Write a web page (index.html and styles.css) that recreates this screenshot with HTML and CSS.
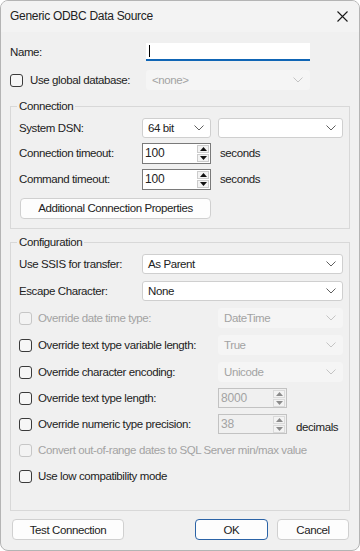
FILE: index.html
```html
<!DOCTYPE html>
<html lang="en">
<head>
  <meta charset="UTF-8">
  <meta name="viewport" content="width=device-width, initial-scale=1.0">
  <title>Generic ODBC Data Source</title>
  <link rel="stylesheet" href="styles.css">
</head>
<body>
  <div class="window">
    <div class="titlebar">
      <span class="title">Generic ODBC Data Source</span>
      <svg class="close" width="11" height="11" viewBox="0 0 11 11">
        <path d="M0.5 0.5 L10.5 10.5 M10.5 0.5 L0.5 10.5" stroke="#1a1a1a" stroke-width="1.1" fill="none"/>
      </svg>
    </div>

    <div class="content">
      <div class="row top-row">
        <label class="top-label">Name:</label>
        <div class="textbox"><span class="caret"></span></div>
      </div>
      <div class="row top-row">
        <div class="top-label check-label">
          <span class="checkbox"></span>
          <span>Use global database:</span>
        </div>
        <div class="combo combo-top disabled">
          <span>&lt;none&gt;</span>
          <svg class="chevron" width="10" height="6" viewBox="0 0 10 6"><path d="M0.5 0.5 L5 5 L9.5 0.5" fill="none"/></svg>
        </div>
      </div>

      <fieldset class="group">
        <legend>Connection</legend>
        <div class="group-rows conn-rows">
          <div class="row">
            <span class="label">System DSN:</span>
            <div class="combo combo-small">
              <span>64 bit</span>
              <svg class="chevron" width="10" height="6" viewBox="0 0 10 6"><path d="M0.5 0.5 L5 5 L9.5 0.5" fill="none"/></svg>
            </div>
            <div class="combo combo-dsn">
              <span></span>
              <svg class="chevron" width="10" height="6" viewBox="0 0 10 6"><path d="M0.5 0.5 L5 5 L9.5 0.5" fill="none"/></svg>
            </div>
          </div>
          <div class="row">
            <span class="label">Connection timeout:</span>
            <div class="spinner">
              <span class="spin-value">100</span>
              <div class="spin-buttons">
                <span class="spin-btn"><svg width="7" height="4" viewBox="0 0 7 4"><path d="M0 4 L3.5 0 L7 4 Z"/></svg></span>
                <span class="spin-btn"><svg width="7" height="4" viewBox="0 0 7 4"><path d="M0 0 L3.5 4 L7 0 Z"/></svg></span>
              </div>
            </div>
            <span class="unit">seconds</span>
          </div>
          <div class="row">
            <span class="label">Command timeout:</span>
            <div class="spinner">
              <span class="spin-value">100</span>
              <div class="spin-buttons">
                <span class="spin-btn"><svg width="7" height="4" viewBox="0 0 7 4"><path d="M0 4 L3.5 0 L7 4 Z"/></svg></span>
                <span class="spin-btn"><svg width="7" height="4" viewBox="0 0 7 4"><path d="M0 0 L3.5 4 L7 0 Z"/></svg></span>
              </div>
            </div>
            <span class="unit">seconds</span>
          </div>
          <div class="row button-row">
            <button class="btn btn-props">Additional Connection Properties</button>
          </div>
        </div>
      </fieldset>

      <fieldset class="group">
        <legend>Configuration</legend>
        <div class="group-rows conf-rows">
          <div class="row">
            <span class="label">Use SSIS for transfer:</span>
            <div class="combo combo-wide">
              <span>As Parent</span>
              <svg class="chevron" width="10" height="6" viewBox="0 0 10 6"><path d="M0.5 0.5 L5 5 L9.5 0.5" fill="none"/></svg>
            </div>
          </div>
          <div class="row">
            <span class="label">Escape Character:</span>
            <div class="combo combo-wide">
              <span>None</span>
              <svg class="chevron" width="10" height="6" viewBox="0 0 10 6"><path d="M0.5 0.5 L5 5 L9.5 0.5" fill="none"/></svg>
            </div>
          </div>
          <div class="row">
            <div class="opt-label check-label disabled-text">
              <span class="checkbox checkbox-disabled"></span>
              <span>Override date time type:</span>
            </div>
            <div class="combo combo-dsn disabled">
              <span>DateTime</span>
              <svg class="chevron" width="10" height="6" viewBox="0 0 10 6"><path d="M0.5 0.5 L5 5 L9.5 0.5" fill="none"/></svg>
            </div>
          </div>
          <div class="row">
            <div class="opt-label check-label">
              <span class="checkbox"></span>
              <span>Override text type variable length:</span>
            </div>
            <div class="combo combo-dsn disabled">
              <span>True</span>
              <svg class="chevron" width="10" height="6" viewBox="0 0 10 6"><path d="M0.5 0.5 L5 5 L9.5 0.5" fill="none"/></svg>
            </div>
          </div>
          <div class="row">
            <div class="opt-label check-label">
              <span class="checkbox"></span>
              <span>Override character encoding:</span>
            </div>
            <div class="combo combo-dsn disabled">
              <span>Unicode</span>
              <svg class="chevron" width="10" height="6" viewBox="0 0 10 6"><path d="M0.5 0.5 L5 5 L9.5 0.5" fill="none"/></svg>
            </div>
          </div>
        </div>
        <div class="group-rows conf-rows-tail">
          <div class="row">
            <div class="opt-label check-label">
              <span class="checkbox"></span>
              <span>Override text type length:</span>
            </div>
            <div class="spinner spinner-disabled">
              <span class="spin-value">8000</span>
              <div class="spin-buttons">
                <span class="spin-btn"><svg width="7" height="4" viewBox="0 0 7 4"><path d="M0 4 L3.5 0 L7 4 Z"/></svg></span>
                <span class="spin-btn"><svg width="7" height="4" viewBox="0 0 7 4"><path d="M0 0 L3.5 4 L7 0 Z"/></svg></span>
              </div>
            </div>
          </div>
          <div class="row">
            <div class="opt-label check-label">
              <span class="checkbox"></span>
              <span>Override numeric type precision:</span>
            </div>
            <div class="spinner spinner-disabled">
              <span class="spin-value">38</span>
              <div class="spin-buttons">
                <span class="spin-btn"><svg width="7" height="4" viewBox="0 0 7 4"><path d="M0 4 L3.5 0 L7 4 Z"/></svg></span>
                <span class="spin-btn"><svg width="7" height="4" viewBox="0 0 7 4"><path d="M0 0 L3.5 4 L7 0 Z"/></svg></span>
              </div>
            </div>
            <span class="unit unit-low">decimals</span>
          </div>
          <div class="row">
            <div class="check-label disabled-text">
              <span class="checkbox checkbox-disabled"></span>
              <span>Convert out-of-range dates to SQL Server min/max value</span>
            </div>
          </div>
          <div class="row">
            <div class="check-label">
              <span class="checkbox"></span>
              <span>Use low compatibility mode</span>
            </div>
          </div>
        </div>
      </fieldset>

      <div class="footer">
        <button class="btn btn-test">Test Connection</button>
        <div class="footer-right">
          <button class="btn btn-ok">OK</button>
          <button class="btn btn-cancel">Cancel</button>
        </div>
      </div>
    </div>
  </div>
</body>
</html>
```

FILE: styles.css
```css
html, body {
  margin: 0;
  padding: 0;
  background-color: #ffffff;
}

body {
  font-family: "Liberation Sans", Arial, sans-serif;
  font-size: 11.5px;
  letter-spacing: -0.4px;
  color: #222222;
}

.window {
  width: 360px;
  height: 551px;
  box-sizing: border-box;
  border: 1px solid #b4b4b4;
  border-radius: 8px;
  background-color: #f0f0f0;
  overflow: hidden;
}

.titlebar {
  height: 31px;
  display: flex;
  align-items: center;
  justify-content: space-between;
  padding: 0 11px 0 9px;
  background-color: #f3f3f3;
  font-size: 12px;
  letter-spacing: -0.3px;
}

.title {
  margin-top: -1px;
}

.close {
  margin-top: -1px;
}

.content {
  padding: 0 9px;
}

.row {
  display: flex;
  align-items: center;
  height: 20px;
}

.top-row {
  margin-top: 10px;
}

.top-row + .top-row {
  margin-top: 8px;
}

.top-label {
  width: 136px;
  flex-shrink: 0;
}

.check-label {
  display: flex;
  align-items: center;
  white-space: nowrap;
}

.top-label.check-label .checkbox {
  margin-right: 7px;
}

.checkbox {
  display: inline-block;
  width: 11px;
  height: 11px;
  border: 1px solid #3a3a3a;
  border-radius: 3px;
  background-color: #f6f6f6;
  margin-right: 6px;
  flex-shrink: 0;
}

.checkbox-disabled {
  border-color: #c6c6c6;
  background-color: #f3f3f3;
}

.disabled-text {
  color: #a3a3a3;
}

.textbox {
  width: 164px;
  height: 18px;
  box-sizing: border-box;
  background-color: #ffffff;
  border-bottom: 2px solid #0f65b5;
  display: flex;
  align-items: center;
  padding-left: 3px;
}

.caret {
  display: inline-block;
  width: 1px;
  height: 12px;
  background-color: #000;
}

.combo {
  height: 20px;
  box-sizing: border-box;
  background-color: #ffffff;
  border: 1px solid #cfcfcf;
  border-radius: 3px;
  display: flex;
  align-items: center;
  justify-content: space-between;
  padding: 0 6px 0 5px;
  flex-shrink: 0;
}

.chevron path {
  stroke: #5f5f5f;
  stroke-width: 1;
}

.combo.disabled {
  background-color: #f5f5f5;
  border-color: #f5f5f5;
  color: #a3a3a3;
}

.combo.disabled .chevron path {
  stroke: #c4c4c4;
}

.combo-top {
  width: 164px;
}

.combo-small {
  width: 69px;
}

.combo-dsn {
  width: 125px;
}

.combo-small + .combo-dsn {
  margin-left: 7px;
}

.combo-wide {
  width: 201px;
}

.group {
  margin: 0;
  padding: 0 6px 0 8px;
  border: 1px solid #d8d8d8;
}

.group legend {
  padding: 0 2px;
  margin-left: -2px;
  line-height: 14px;
}

.group:first-of-type {
  margin-top: 9px;
}

.group + .group {
  margin-top: 6px;
}

.group-rows {
  display: flex;
  flex-direction: column;
}

.conn-rows {
  padding-top: 5px;
  padding-bottom: 10px;
  gap: 5px;
}

.conn-rows .row + .row + .row {
  margin-top: 1px;
}

.conn-rows .button-row {
  margin-top: 4px !important;
  padding-left: 1px;
}

.conf-rows {
  padding-top: 5px;
  gap: 7px;
}

.conf-rows-tail {
  padding-top: 6px;
  padding-bottom: 24px;
  gap: 6px;
}

.label {
  width: 123px;
  flex-shrink: 0;
}

.opt-label {
  width: 199px;
  flex-shrink: 0;
}

.spinner {
  width: 69px;
  height: 21px;
  box-sizing: border-box;
  background-color: #ffffff;
  border: 1px solid #7a7a7a;
  display: flex;
  align-items: center;
  justify-content: space-between;
  padding: 0 1px 0 2px;
  flex-shrink: 0;
}

.spin-value {
  font-size: 12px;
  letter-spacing: -0.2px;
}

.spin-buttons {
  display: flex;
  flex-direction: column;
  gap: 1px;
}

.spin-btn {
  width: 12px;
  height: 8px;
  box-sizing: border-box;
  border: 1px solid #cccccc;
  background-color: #f3f3f3;
  display: flex;
  align-items: center;
  justify-content: center;
}

.spin-btn svg path {
  fill: #111;
}

.spinner-disabled {
  height: 20px;
  background-color: #f0f0f0;
  border-color: #c2c2c2;
  color: #a3a3a3;
}

.spinner-disabled .spin-btn {
  border-color: #dadada;
}

.spinner-disabled .spin-btn svg path {
  fill: #8c8c8c;
}

.unit {
  margin-left: 9px;
}

.unit-low {
  margin-top: 5px;
}

.btn {
  height: 21px;
  box-sizing: border-box;
  background-color: #fdfdfd;
  border: 1px solid #d0d0d0;
  border-radius: 4px;
  font-family: inherit;
  font-size: 11.5px;
  letter-spacing: -0.4px;
  color: #222222;
  padding: 0;
}

.btn-props {
  width: 191px;
}

.footer {
  display: flex;
  justify-content: space-between;
  align-items: center;
  margin-top: 8px;
  padding: 0 1px 0 2px;
}

.footer-right {
  display: flex;
  gap: 9px;
}

.btn-test {
  width: 112px;
}

.btn-ok {
  width: 73px;
  border-color: #2b63a6;
}

.btn-cancel {
  width: 72px;
}
```
